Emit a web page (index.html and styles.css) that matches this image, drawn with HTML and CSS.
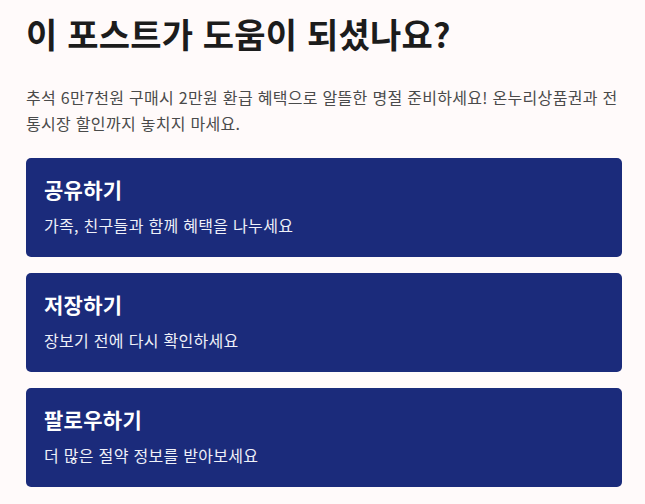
FILE: index.html
```html
<!DOCTYPE html>
<html lang="ko">
<head>
<meta charset="utf-8">
<link rel="stylesheet" href="styles.css">
</head>
<body>
<main class="page">
  <h1 class="title">이 포스트가 도움이 되셨나요?</h1>
  <p class="lead">추석 6만7천원 구매시 2만원 환급 혜택으로 알뜰한 명절 준비하세요! 온누리상품권과 전통시장 할인까지 놓치지 마세요.</p>
  <div class="cards">
    <div class="card">
      <h2 class="card-title">공유하기</h2>
      <p class="card-text">가족, 친구들과 함께 혜택을 나누세요</p>
    </div>
    <div class="card">
      <h2 class="card-title">저장하기</h2>
      <p class="card-text">장보기 전에 다시 확인하세요</p>
    </div>
    <div class="card">
      <h2 class="card-title">팔로우하기</h2>
      <p class="card-text">더 많은 절약 정보를 받아보세요</p>
    </div>
  </div>
</main>
</body>
</html>
```
FILE: styles.css
```css
html, body {
  margin: 0;
  padding: 0;
  background: #fffafa;
}
body {
  font-family: "Noto Sans CJK KR", "Noto Sans", sans-serif;
  color: #222;
}
.page {
  padding: 10px 23px 0 26px;
}
.title {
  margin: 0;
  font-size: 34px;
  line-height: 48px;
  font-weight: 700;
  color: #1c1c1c;
  letter-spacing: 0.2px;
}
.lead {
  margin: 26px 0 0;
  font-size: 16px;
  line-height: 26px;
  color: #4a4a4a;
  letter-spacing: 0.3px;
}
.cards {
  display: flex;
  flex-direction: column;
  gap: 16px;
  margin-top: 22px;
}
.card {
  background: #1b2b7b;
  border-radius: 5px;
  height: 99px;
  box-sizing: border-box;
  padding: 16px 18px;
  color: #fff;
}
.card-title {
  margin: 0;
  font-size: 21px;
  line-height: 30px;
  font-weight: 700;
  letter-spacing: 0.3px;
}
.card-text {
  margin: 9px 0 0;
  font-size: 16px;
  line-height: 24px;
  color: #eef0f8;
  letter-spacing: 0.3px;
}
```
